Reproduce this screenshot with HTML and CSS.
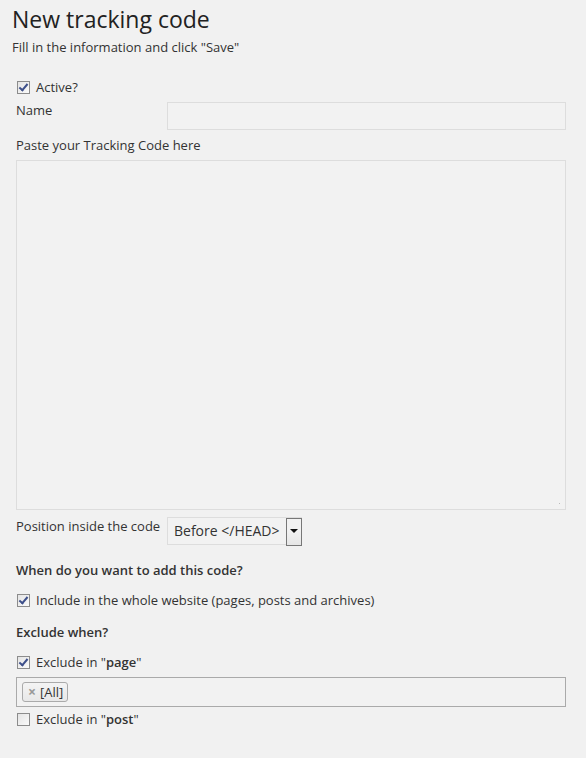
FILE: index.html
```html
<!DOCTYPE html>
<html>
<head>
<meta charset="utf-8">
<link rel="stylesheet" href="styles.css">
</head>
<body>
<div class="page">
  <h1 class="title">New tracking code</h1>
  <p class="subtitle">Fill in the information and click "Save"</p>

  <label class="check-row active-row"><span class="cb checked"></span><span>Active?</span></label>

  <div class="name-row">
    <span class="label">Name</span>
    <div class="text-input"></div>
  </div>

  <div class="label paste-label">Paste your Tracking Code here</div>
  <div class="textarea"><span class="grip"></span></div>

  <div class="pos-row">
    <span class="label">Position inside the code</span>
    <div class="select">
      <span class="select-text">Before &lt;/HEAD&gt;</span>
      <span class="select-btn"><span class="arrow"></span></span>
    </div>
  </div>

  <div class="heading when">When do you want to add this code?</div>
  <label class="check-row include-row"><span class="cb checked"></span><span>Include in the whole website (pages, posts and archives)</span></label>

  <div class="heading exclude">Exclude when?</div>
  <label class="check-row page-row"><span class="cb checked"></span><span>Exclude in "<b>page</b>"</span></label>
  <div class="tags"><span class="tag"><span class="tag-x">×</span>[All]</span></div>
  <label class="check-row post-row"><span class="cb"></span><span>Exclude in "<b>post</b>"</span></label>
</div>
</body>
</html>
```
FILE: styles.css
```css
html, body {
  margin: 0;
  padding: 0;
  background: #f1f1f1;
}
body {
  font-family: "Open Sans", "DejaVu Sans", sans-serif;
  font-size: 13px;
  color: #333;
}
.page {
  padding: 0 20px 0 16px;
  width: 550px;
}
.title {
  font-weight: 400;
  font-size: 23px;
  line-height: 30px;
  margin: 4px 0 0 -4px;
  color: #222;
}
.subtitle {
  margin: 3px 0 0 -4px;
  line-height: 20px;
  color: #333;
}
.check-row {
  display: flex;
  align-items: center;
  gap: 6px;
  line-height: 20px;
}
.check-row b { font-weight: 600; }
.active-row { margin-top: 20px; margin-left: 1px; }
.cb {
  width: 11px;
  height: 11px;
  border: 1px solid #8c8c8c;
  background: linear-gradient(135deg, #e4e4e4, #fafafa);
  position: relative;
  flex: none;
}
.cb.checked::after {
  content: "";
  position: absolute;
  left: 3px;
  top: 0px;
  width: 3px;
  height: 7px;
  border: solid #3d4f8a;
  border-width: 0 2px 2px 0;
  transform: rotate(40deg);
}
.name-row {
  display: flex;
  align-items: flex-start;
  margin-top: 5px;
}
.name-row .label {
  width: 151px;
  line-height: 20px;
  margin-top: -2px;
}
.text-input {
  width: 398px;
  height: 26px;
  border: 1px solid #ddd;
  background: #f2f2f2;
}
.paste-label {
  margin-top: 5px;
  line-height: 20px;
}
.textarea {
  margin-top: 5px;
  width: 548px;
  height: 348px;
  border: 1px solid #ddd;
  background: #f2f2f2;
  position: relative;
}
.grip {
  position: absolute;
  right: 3px;
  bottom: 3px;
  width: 7px;
  height: 7px;
  background:
    radial-gradient(circle, #bbb 0.8px, transparent 1px) 0 0 / 3px 3px;
  clip-path: polygon(100% 0, 100% 100%, 0 100%);
}
.pos-row {
  display: flex;
  align-items: flex-start;
  margin-top: 7px;
}
.pos-row .label {
  width: 151px;
  line-height: 20px;
  margin-top: -1px;
}
.select {
  display: flex;
  height: 28px;
  border: 1px solid #ddd;
  border-right: none;
  box-sizing: border-box;
  background: #f2f2f2;
}
.select-text {
  font-size: 14px;
  line-height: 26px;
  padding: 0 6px 0 6px;
  color: #333;
}
.select-btn {
  width: 14px;
  border: 1px solid #777;
  background: linear-gradient(#f2f2f2 45%, #e6e6e6);
  display: flex;
  justify-content: center;
  padding-top: 10px;
  box-sizing: content-box;
  height: 16px;
}
.arrow {
  width: 0;
  height: 0;
  border-left: 4px solid transparent;
  border-right: 4px solid transparent;
  border-top: 4px solid #111;
}
.heading {
  font-weight: 600;
  line-height: 20px;
}
.when { margin-top: 15px; }
.include-row { margin-top: 10px; margin-left: 1px; }
.exclude { margin-top: 12px; }
.page-row { margin-top: 10px; margin-left: 1px; }
.tags {
  margin-top: 5px;
  width: 543px;
  height: 28px;
  border: 1px solid #aaa;
  background: #f2f2f2;
  display: flex;
  align-items: center;
  padding-left: 5px;
  box-sizing: content-box;
}
.tag {
  display: inline-flex;
  align-items: center;
  height: 18px;
  padding: 0 4px 0 5px;
  border: 1px solid #aaa;
  border-radius: 3px;
  background: linear-gradient(#f4f4f4, #e8e8e8);
  font-size: 13px;
  line-height: 18px;
  color: #333;
}
.tag-x {
  font-size: 14px;
  font-weight: 700;
  color: #999;
  margin-right: 4px;
}
.post-row { margin-top: 2px; margin-left: 1px; }
```
